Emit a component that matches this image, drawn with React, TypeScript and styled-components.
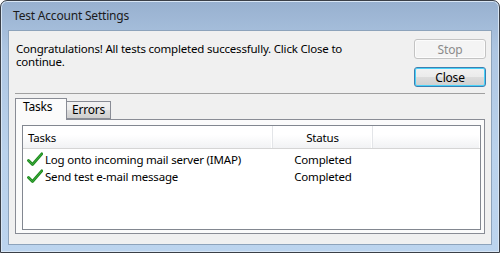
import React from 'react';
import styled, { createGlobalStyle } from 'styled-components';

const GlobalStyle = createGlobalStyle`
  body {
    margin: 0;
    background: #ffffff;
    font-family: "Noto Sans", "DejaVu Sans", sans-serif;
    font-size: 11.5px;
    letter-spacing: -0.2px;
    color: #000;
  }
`;

const Window = styled.div`
  width: 500px;
  height: 253px;
  box-sizing: border-box;
  border: 1px solid #3a3f47;
  border-radius: 7px 7px 0 0;
  background: linear-gradient(to bottom, #97b0cf 0%, #aec6e2 20%, #bad2ec 60%, #bcd4ee 100%);
  box-shadow: inset 0 0 0 1px #d8e6f5;
  display: flex;
  flex-direction: column;
  overflow: hidden;
`;

const TitleBar = styled.div`
  height: 29px;
  padding-left: 12px;
  display: flex;
  align-items: center;
  font-size: 12px;
  color: #1b1b1b;
  flex-shrink: 0;
`;

const Client = styled.div`
  flex: 1;
  margin: 0 7px 7px 7px;
  border: 1px solid #8da3bb;
  background: #f0f0f0;
  padding: 8px 6px 10px 6px;
  display: flex;
  flex-direction: column;
`;

const TopRow = styled.div`
  display: flex;
  justify-content: space-between;
`;

const Message = styled.p`
  margin: 3px 0 0 1px;
  width: 340px;
  line-height: 13px;
`;

const ButtonColumn = styled.div`
  display: flex;
  flex-direction: column;
  gap: 8px;
  margin-right: -1px;
`;

const Button = styled.button<{ $default?: boolean }>`
  width: 72px;
  height: 20px;
  box-sizing: border-box;
  padding: 0;
  font-family: inherit;
  font-size: 12px;
  letter-spacing: inherit;
  border-radius: 3px;
  border: 1px solid ${({ $default, disabled }) =>
    disabled ? '#c3c3c3' : $default ? '#3c7fb1' : '#707070'};
  color: ${({ disabled }) => (disabled ? '#8b8b8b' : '#000')};
  background: ${({ disabled }) =>
    disabled
      ? '#f4f4f4'
      : 'linear-gradient(to bottom, #f2f2f2 0%, #ebebeb 49%, #dddddd 50%, #cfcfcf 100%)'};
  box-shadow: ${({ $default }) => ($default ? 'inset 0 0 0 1px #48d2f9' : 'inset 0 0 0 1px #fcfcfc')};
`;

const Separator = styled.hr`
  margin: 6px 0 0 0;
  border: 0;
  border-top: 1px solid #a0a0a0;
  height: 0;
`;

const TabStrip = styled.div`
  display: flex;
  align-items: flex-end;
  margin-top: 4px;
  height: 21px;
  position: relative;
  z-index: 1;
`;

const Tab = styled.div<{ $active?: boolean }>`
  box-sizing: border-box;
  height: ${({ $active }) => ($active ? '22px' : '18px')};
  margin-bottom: ${({ $active }) => ($active ? '-1px' : '0')};
  padding: ${({ $active }) => ($active ? '0 7px 0 7px' : '0 6px 0 5px')};
  line-height: 16px;
  font-size: 12px;
  border: 1px solid #898c95;
  border-bottom: ${({ $active }) => ($active ? '0' : '1px solid #898c95')};
  border-left: ${({ $active }) => ($active ? '1px solid #898c95' : '0')};
  background: ${({ $active }) =>
    $active ? '#fbfbfb' : 'linear-gradient(to bottom, #f2f2f2 0%, #ebebeb 50%, #dddddd 51%, #cfcfcf 100%)'};
  width: ${({ $active }) => ($active ? '52px' : '44px')};
`;

const TabPanel = styled.div`
  flex: 1;
  border: 1px solid #898c95;
  background: #fbfbfb;
  padding: 5px 3px 3px 6px;
  display: flex;
`;

const ListBox = styled.div`
  flex: 1;
  border: 1px solid #828790;
  background: #ffffff;
`;

const HeaderRow = styled.div`
  display: flex;
  height: 22px;
  border-bottom: 1px solid #d5d5d5;
  background: linear-gradient(to bottom, #ffffff 0%, #ffffff 40%, #f1f2f4 100%);
  margin-bottom: 2px;
`;

const HeaderCell = styled.div<{ $width?: number; $center?: boolean }>`
  box-sizing: border-box;
  width: ${({ $width }) => ($width ? `${$width}px` : 'auto')};
  flex: ${({ $width }) => ($width ? 'none' : '1')};
  display: flex;
  align-items: center;
  justify-content: ${({ $center }) => ($center ? 'center' : 'flex-start')};
  padding-left: ${({ $center }) => ($center ? '0' : '5px')};
  border-right: 1px solid #e3e5e8;
  box-shadow: inset -1px 0 0 #ffffff;
  &:last-child {
    border-right: 0;
  }
`;

const Row = styled.div`
  display: flex;
  height: 17px;
  align-items: center;
`;

const TaskCell = styled.div`
  width: 250px;
  display: flex;
  align-items: center;
  gap: 2px;
  padding-left: 4px;
  box-sizing: border-box;
`;

const StatusCell = styled.div`
  width: 100px;
  text-align: center;
`;

const Check = () => (
  <svg width="16" height="16" viewBox="0 0 16 16">
    <path d="M1.5 8.5 L5.5 12.5 L14.8 1.8" fill="none" stroke="#1f8a1f" strokeWidth="2.8" strokeLinecap="round" strokeLinejoin="round" />
    <path d="M1.5 8.5 L5.5 12.5 L14.8 1.8" fill="none" stroke="#3fb13f" strokeWidth="1" strokeLinecap="round" strokeLinejoin="round" />
  </svg>
);

const tasks = ['Log onto incoming mail server (IMAP)', 'Send test e-mail message'];

export default function App() {
  return (
    <>
      <GlobalStyle />
      <Window>
        <TitleBar>Test Account Settings</TitleBar>
        <Client>
          <TopRow>
            <Message>Congratulations! All tests completed successfully. Click Close to continue.</Message>
            <ButtonColumn>
              <Button disabled>Stop</Button>
              <Button $default>Close</Button>
            </ButtonColumn>
          </TopRow>
          <Separator />
          <TabStrip>
            <Tab $active>Tasks</Tab>
            <Tab>Errors</Tab>
          </TabStrip>
          <TabPanel>
            <ListBox>
              <HeaderRow>
                <HeaderCell $width={250}>Tasks</HeaderCell>
                <HeaderCell $width={100} $center>Status</HeaderCell>
                <HeaderCell />
              </HeaderRow>
              {tasks.map((t) => (
                <Row key={t}>
                  <TaskCell>
                    <Check />
                    {t}
                  </TaskCell>
                  <StatusCell>Completed</StatusCell>
                </Row>
              ))}
            </ListBox>
          </TabPanel>
        </Client>
      </Window>
    </>
  );
}
